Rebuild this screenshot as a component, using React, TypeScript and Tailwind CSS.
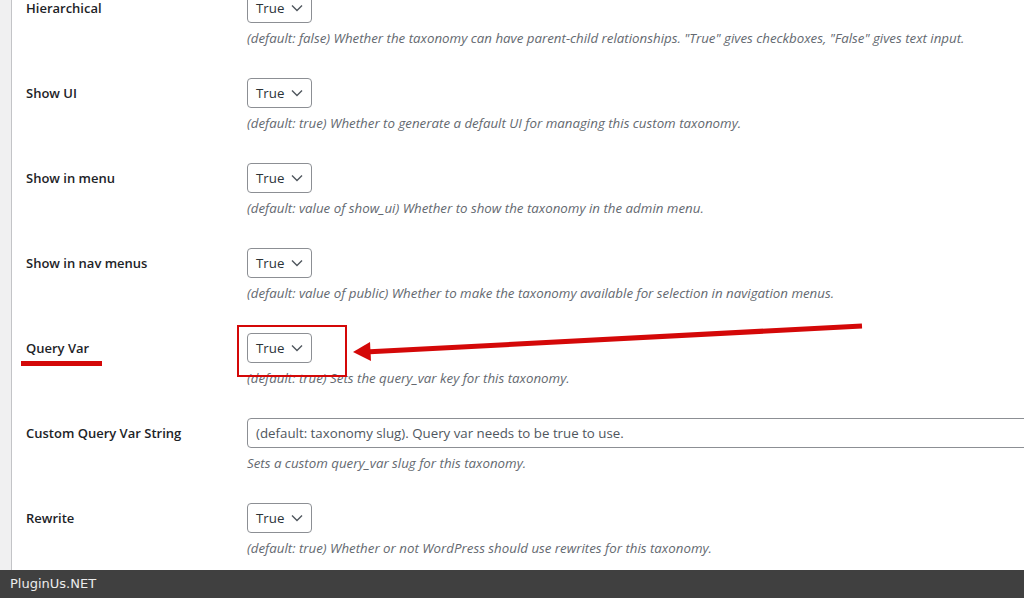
import React from "react";

type Row = {
  label: string;
  value?: string;
  placeholder?: string;
  description: string;
};

const rows: readonly Row[] = [
  {
    label: "Hierarchical",
    value: "True",
    description:
      '(default: false) Whether the taxonomy can have parent-child relationships. "True" gives checkboxes, "False" gives text input.',
  },
  {
    label: "Show UI",
    value: "True",
    description: "(default: true) Whether to generate a default UI for managing this custom taxonomy.",
  },
  {
    label: "Show in menu",
    value: "True",
    description: "(default: value of show_ui) Whether to show the taxonomy in the admin menu.",
  },
  {
    label: "Show in nav menus",
    value: "True",
    description:
      "(default: value of public) Whether to make the taxonomy available for selection in navigation menus.",
  },
  {
    label: "Query Var",
    value: "True",
    description: "(default: true) Sets the query_var key for this taxonomy.",
  },
  {
    label: "Custom Query Var String",
    placeholder: "(default: taxonomy slug). Query var needs to be true to use.",
    description: "Sets a custom query_var slug for this taxonomy.",
  },
  {
    label: "Rewrite",
    value: "True",
    description: "(default: true) Whether or not WordPress should use rewrites for this taxonomy.",
  },
];

function Chevron() {
  return (
    <svg width="12" height="8" viewBox="0 0 12 8" fill="none" aria-hidden>
      <path d="M1 1.5 L6 6.5 L11 1.5" stroke="#50575e" strokeWidth="1.4" />
    </svg>
  );
}

function SelectBox({ value }: { value: string }) {
  return (
    <div className="flex h-[30px] w-[65px] items-center justify-between rounded-[4px] border border-[#8c8f94] bg-white pl-[8px] pr-[8px] text-[13.3px] text-[#2c3338]">
      <span className="pt-[2px]">{value}</span>
      <Chevron />
    </div>
  );
}

export default function App() {
  return (
    <div className="relative h-[598px] w-[1024px] overflow-hidden bg-white font-['Open_Sans',sans-serif]">
      <div className="flex h-full">
        <div className="w-[12px] shrink-0 border-r border-[#c3c4c7] bg-[#f0f0f1]" />
        <div className="-mt-[7px] flex-1 pl-[14px]">
          {rows.map((row) => (
            <div key={row.label} className="flex h-[85px]">
              <div className="flex h-[30px] w-[221px] shrink-0 items-center pt-[2px] text-[13px] font-semibold text-[#1d2327]">
                {row.label}
              </div>
              <div className="flex-1">
                {row.value ? (
                  <SelectBox value={row.value} />
                ) : (
                  <div className="flex h-[30px] w-[800px] items-center rounded-l-[4px] border border-[#8c8f94] pl-[8px] pt-[1px] text-[13.3px] text-[#50575e]">
                    {row.placeholder}
                  </div>
                )}
                <p className="mt-[6px] whitespace-nowrap text-[13.3px] leading-[19px] text-[#646970] italic">
                  {row.description}
                </p>
              </div>
            </div>
          ))}
        </div>
      </div>

      {/* annotations */}
      <div className="absolute left-[237px] top-[325px] h-[52px] w-[110px] border-2 border-[#d40808]" />
      <div className="absolute left-[21px] top-[361px] h-[5px] w-[81px] bg-[#d40808]" />
      <svg className="absolute left-0 top-0" width="1024" height="598" aria-hidden>
        <line x1="862" y1="326" x2="365" y2="352" stroke="#d40808" strokeWidth="5" />
        <polygon points="353,352 370,342 371,361" fill="#d40808" />
      </svg>

      <div className="absolute bottom-0 left-0 flex h-[28px] w-full items-center bg-[#404040] pl-[10px] font-['DejaVu_Sans',sans-serif] text-[13px] text-[#ececec]">
        PluginUs.NET
      </div>
    </div>
  );
}
